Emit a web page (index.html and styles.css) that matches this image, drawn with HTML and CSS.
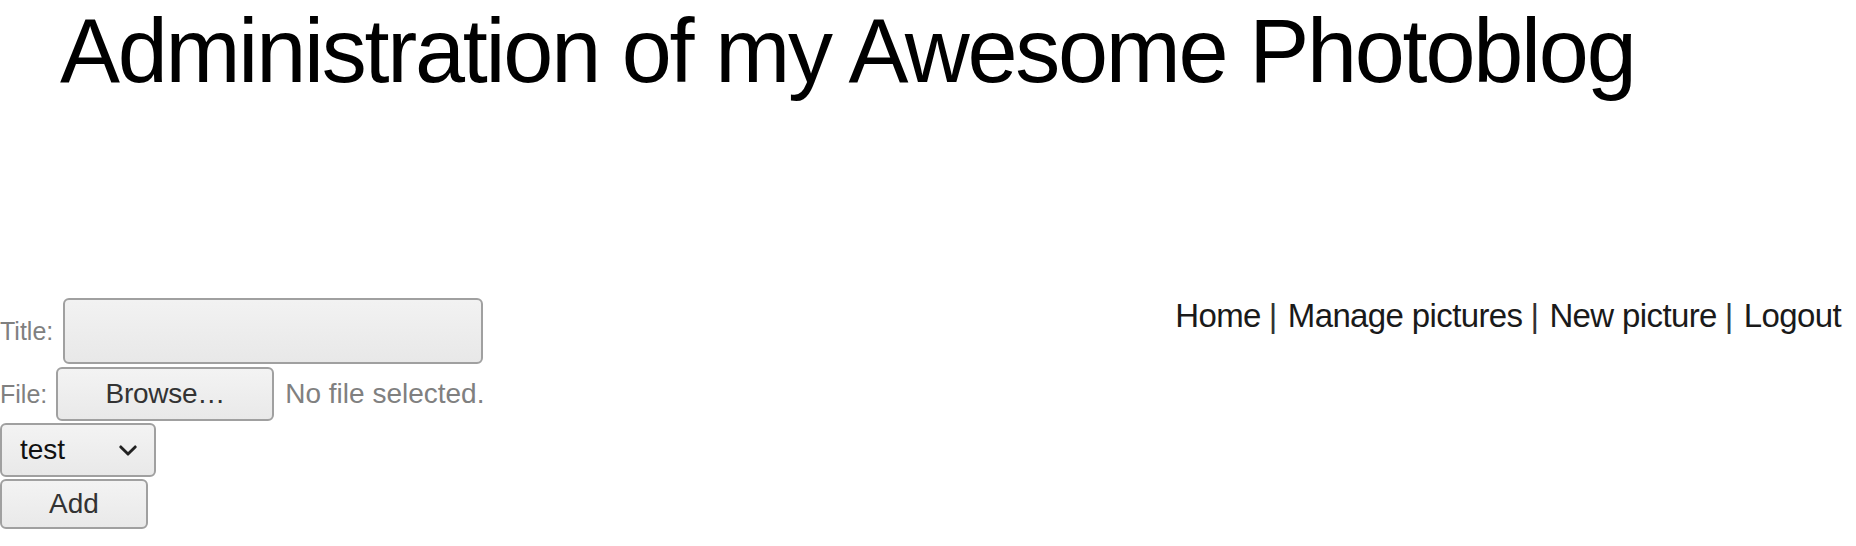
FILE: index.html
```html
<!DOCTYPE html>
<html lang="en">
<head>
<meta charset="utf-8">
<title>Administration of my Awesome Photoblog</title>
<link rel="stylesheet" href="styles.css">
</head>
<body>
<header class="site-header">
  <h1 class="site-title">Administration of my Awesome Photoblog</h1>
</header>
<main class="main">
  <form class="upload-form">
    <div class="form-row row-title">
      <label class="field-label" for="title">Title:</label>
      <input class="text-input" id="title" type="text">
    </div>
    <div class="form-row row-file">
      <span class="field-label">File:</span>
      <span class="control file-button">Browse…</span>
      <span class="file-status">No file selected.</span>
    </div>
    <div class="form-row row-select">
      <span class="control select-box">
        <span class="select-value">test</span>
        <svg class="chevron" viewBox="0 0 20 12" width="20" height="12" aria-hidden="true"><path d="M2 2 L10 10 L18 2" fill="none" stroke="#222" stroke-width="3.2" stroke-linecap="round" stroke-linejoin="round"/></svg>
      </span>
    </div>
    <div class="form-row row-submit">
      <button class="control add-button" type="button">Add</button>
    </div>
  </form>
  <nav class="nav">
    <a class="nav-link" href="#">Home</a><span class="sep">|</span><a class="nav-link" href="#">Manage pictures</a><span class="sep">|</span><a class="nav-link" href="#">New picture</a><span class="sep">|</span><a class="nav-link" href="#">Logout</a>
  </nav>
</main>
</body>
</html>
```
FILE: styles.css
```css
html, body {
  margin: 0;
  padding: 0;
  background: #ffffff;
}

body {
  font-family: "Liberation Sans", Arial, sans-serif;
  color: #000;
}

.site-header {
  padding-left: 60px;
}

.site-title {
  margin: 0;
  font-size: 90px;
  font-weight: normal;
  line-height: normal;
  letter-spacing: -2.23px;
  color: #000;
}

.main {
  display: flex;
  justify-content: space-between;
  align-items: flex-start;
  margin-top: 194px;
  padding-right: 15px;
}

.upload-form {
  display: flex;
  flex-direction: column;
  margin-top: 1px;
}

.form-row {
  display: flex;
  align-items: center;
}

.row-file { margin-top: 3px; }
.row-select { margin-top: 2px; }
.row-submit { margin-top: 2px; }

.field-label {
  font-size: 25px;
  color: #808080;
}

.row-title .field-label { margin-right: 10px; }
.row-file .field-label { margin-right: 9px; }

.text-input {
  box-sizing: border-box;
  width: 420px;
  height: 66px;
  margin: 0;
  border: 2px solid #a0a0a0;
  border-radius: 6px;
  background: linear-gradient(#f2f2f2, #e8e8e8);
  font-family: inherit;
  font-size: 28px;
}

.control {
  box-sizing: border-box;
  display: inline-flex;
  align-items: center;
  border: 2px solid #a0a0a0;
  border-radius: 6px;
  background: linear-gradient(#f3f3f3, #e9e9e9);
  color: #333;
  font-family: "Liberation Sans", Arial, sans-serif;
  font-size: 28px;
}

.file-button {
  width: 218px;
  height: 54px;
  justify-content: center;
  letter-spacing: -0.3px;
}

.file-status {
  margin-left: 11px;
  font-size: 28px;
  color: #808080;
}

.select-box {
  width: 156px;
  height: 54px;
  padding: 0 17px 0 18px;
  justify-content: space-between;
  color: #111;
}

.chevron {
  display: block;
  width: 18px;
  height: 11px;
}

.add-button {
  width: 148px;
  height: 50px;
  padding: 0;
  justify-content: center;
  cursor: pointer;
}

.nav {
  font-size: 33px;
  letter-spacing: -0.62px;
  color: #1a1a1a;
  white-space: nowrap;
}

.nav-link {
  color: #1a1a1a;
  text-decoration: none;
}

.sep {
  margin: 0 11px 0 8px;
  color: #333;
}
```
